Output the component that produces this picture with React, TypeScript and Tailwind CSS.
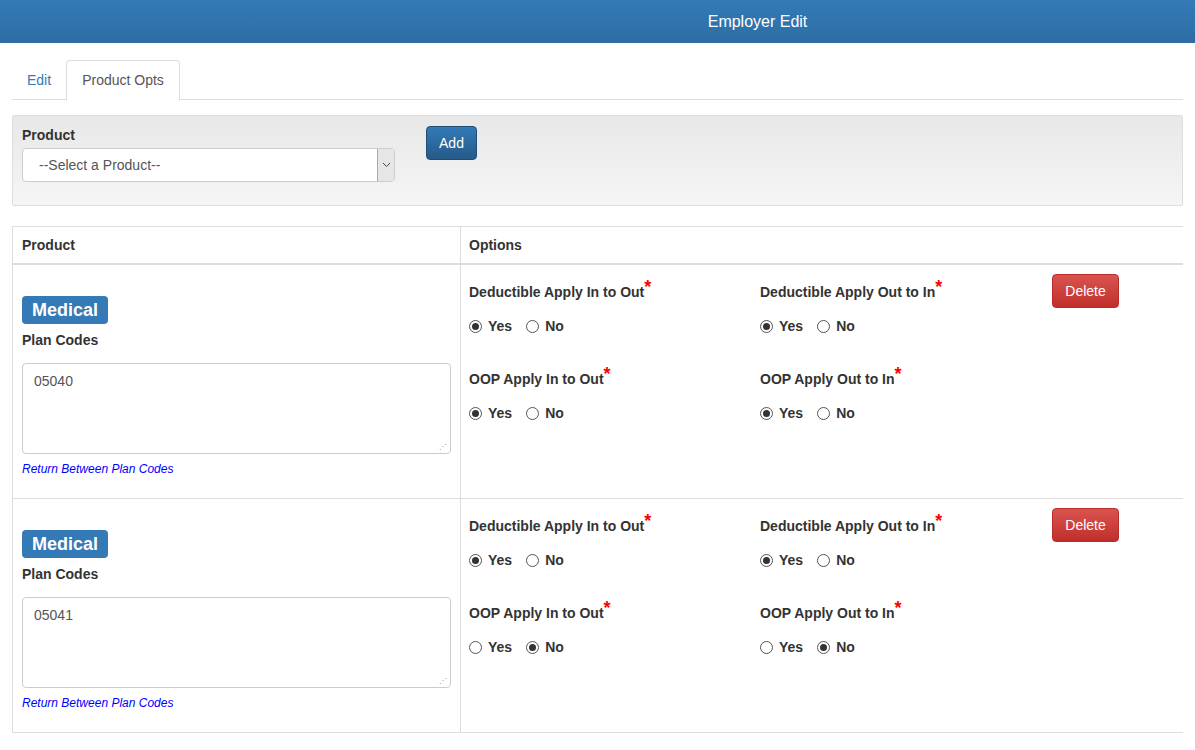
import React from "react";

const Radio = ({ on }: { on: boolean }) => (
  <span className="inline-flex w-[13px] h-[13px] rounded-full border border-[#555] bg-white items-center justify-center">
    {on && <span className="w-[7px] h-[7px] rounded-full bg-[#333]" />}
  </span>
);

const Group = ({ label, yes }: { label: string; yes: boolean }) => (
  <div className="h-[87px]">
    <div className="font-bold text-[14px] text-[#333] h-[20px] leading-[20px]">
      {label}
      <span className="text-[#f00] text-[18px] relative top-[-4px]">*</span>
    </div>
    <div className="flex items-center mt-[15px] font-bold text-[14px] text-[#333]">
      <Radio on={yes} />
      <span className="ml-[6px]">Yes</span>
      <span className="ml-[14px] flex items-center">
        <Radio on={!yes} />
        <span className="ml-[6px]">No</span>
      </span>
    </div>
  </div>
);

const Row = ({ code, oop }: { code: string; oop: boolean }) => (
  <div className="flex border-b border-[#ddd] h-[234px]">
    <div className="w-[448px] border-r border-[#ddd] px-[9px] pt-[31px]">
      <span className="inline-block bg-[#337ab7] text-white font-bold text-[18px] leading-[28px] px-[10px] rounded-[4px]">
        Medical
      </span>
      <div className="font-bold text-[14px] text-[#333] mt-[6px]">Plan Codes</div>
      <div className="relative mt-[12px] h-[91px] border border-[#ccc] rounded-[4px] px-[11px] pt-[7px] text-[14px] text-[#555]">
        {code}
        <span className="absolute right-[3px] bottom-[2px] text-[8px] text-[#999] leading-none">⋰</span>
      </div>
      <div className="italic text-[12px] text-[#00f] mt-[6px]">Return Between Plan Codes</div>
    </div>
    <div className="flex-1 pl-[8px] pt-[16px] flex">
      <div className="w-[291px]">
        <Group label="Deductible Apply In to Out" yes={true} />
        <Group label="OOP Apply In to Out" yes={oop} />
      </div>
      <div className="w-[292px]">
        <Group label="Deductible Apply Out to In" yes={true} />
        <Group label="OOP Apply Out to In" yes={oop} />
      </div>
      <div className="-mt-[7px]">
        <button className="w-[67px] h-[34px] rounded-[4px] text-white text-[14px] border border-[#b92c28] bg-gradient-to-b from-[#d9534f] to-[#c12e2a]">
          Delete
        </button>
      </div>
    </div>
  </div>
);

export default function App() {
  return (
    <div className="w-[1195px] h-[750px] overflow-hidden bg-white" style={{ fontFamily: '"Liberation Sans", Arial, sans-serif' }}>
      <div className="h-[43px] bg-gradient-to-b from-[#337ab7] to-[#2e6da4] text-white text-[16px] flex items-center justify-center pl-[320px]">
        Employer Edit
      </div>
      <div className="px-[12px]">
        <div className="flex mt-[17px] border-b border-[#ddd] h-[40px] text-[14px]">
          <div className="px-[15px] leading-[40px] text-[#337ab7]">Edit</div>
          <div className="px-[15px] leading-[39px] text-[#555] border border-[#ddd] border-b-white rounded-t-[4px] bg-white h-[41px]">
            Product Opts
          </div>
        </div>
        <div className="mt-[15px] h-[91px] border border-[#ddd] rounded-[2px] bg-gradient-to-b from-[#e8e8e8] to-[#f5f5f5] flex px-[9px] pt-[10px]">
          <div>
            <div className="font-bold text-[14px] text-[#333] leading-[18px]">Product</div>
            <div className="mt-[4px] w-[373px] h-[34px] border border-[#ccc] rounded-[4px] bg-white flex text-[14px] text-[#555]">
              <div className="flex-1 pl-[16px] leading-[32px]">--Select a Product--</div>
              <div className="w-[17px] bg-[#e6e6e6] border-l border-[#aaa] flex items-center justify-center rounded-r-[3px]">
                <svg width="9" height="6" viewBox="0 0 9 6"><path d="M1 1l3.5 3.5L8 1" fill="none" stroke="#444" strokeWidth="1" /></svg>
              </div>
            </div>
          </div>
          <button className="ml-[31px] w-[51px] h-[34px] rounded-[4px] text-white text-[14px] border border-[#204d74] bg-gradient-to-b from-[#337ab7] to-[#265a88]">
            Add
          </button>
        </div>
        <div className="mt-[20px] border-l border-t border-[#ddd]">
          <div className="flex h-[38px] border-b-2 border-[#ddd] font-bold text-[14px] text-[#333]">
            <div className="w-[448px] border-r border-[#ddd] px-[9px] leading-[36px]">Product</div>
            <div className="px-[8px] leading-[36px]">Options</div>
          </div>
          <Row code="05040" oop={true} />
          <Row code="05041" oop={false} />
        </div>
      </div>
    </div>
  );
}
